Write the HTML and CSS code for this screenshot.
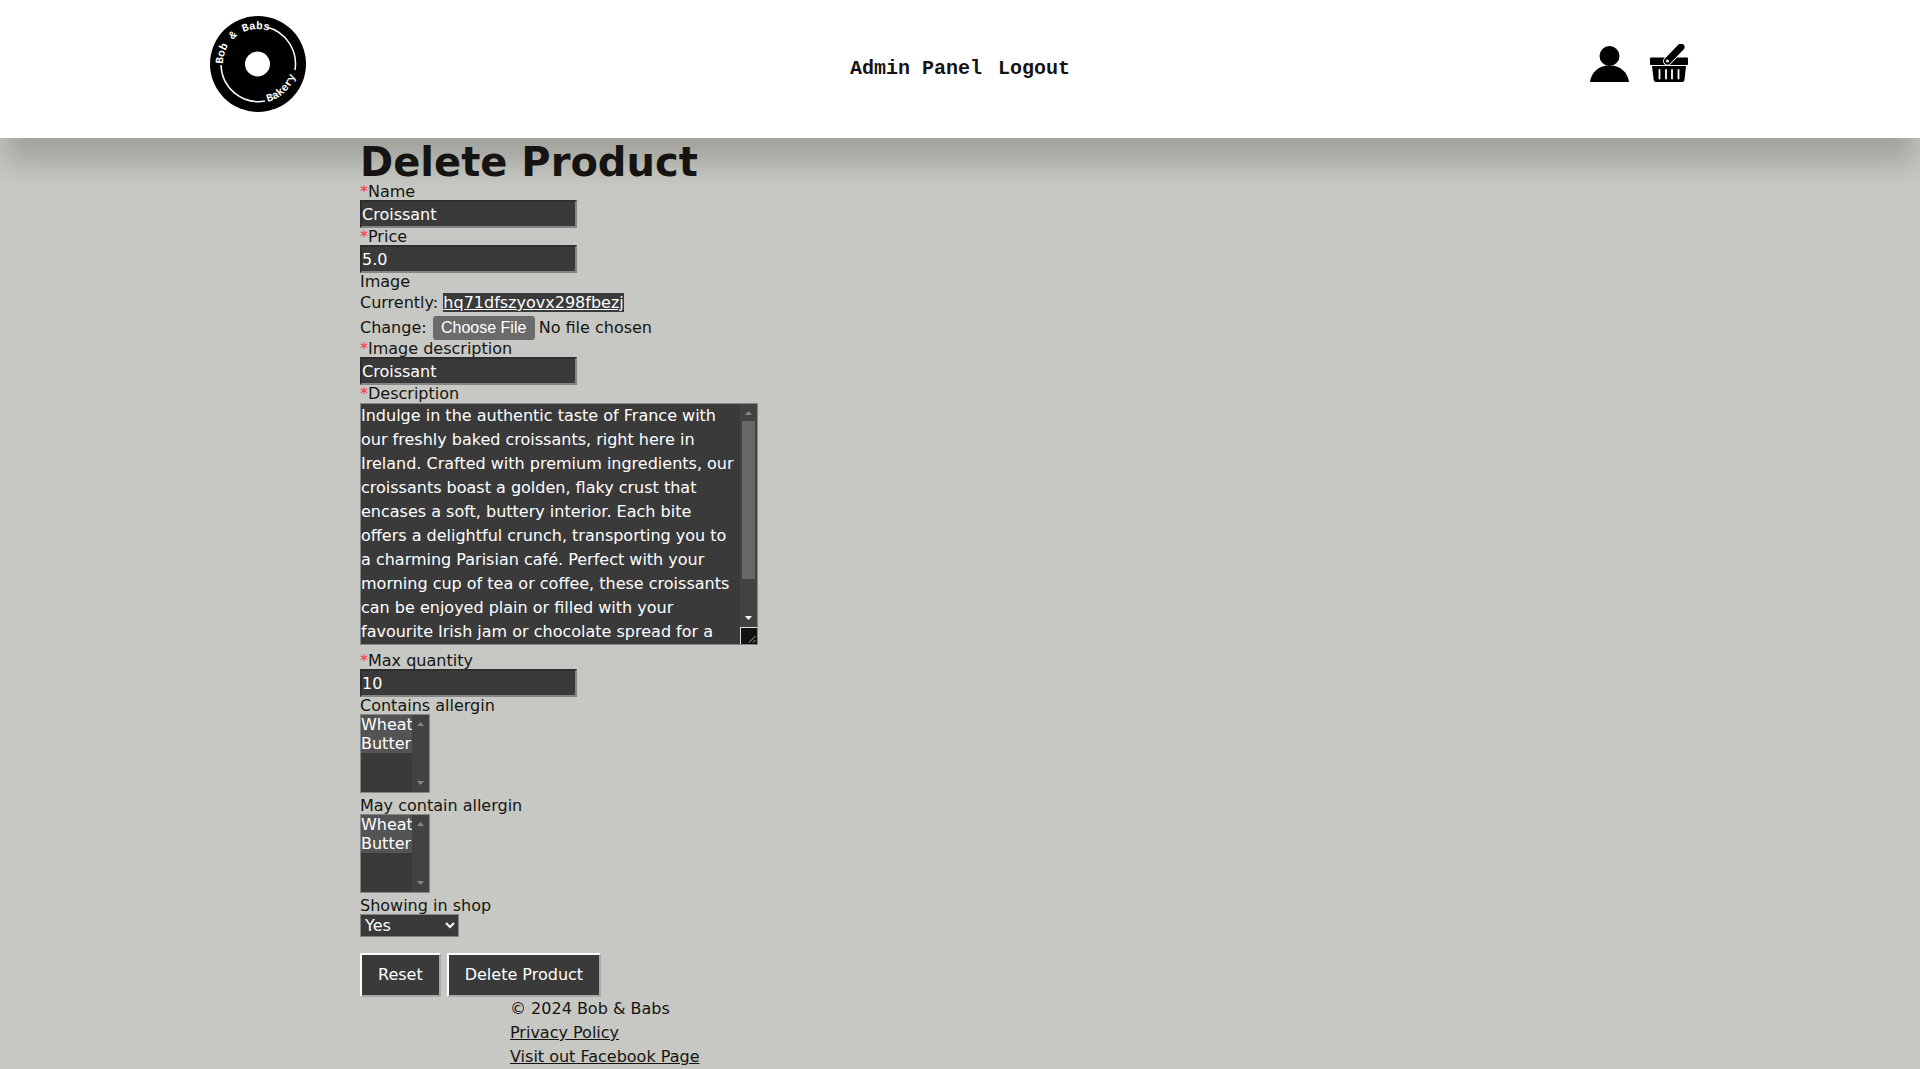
FILE: index.html
```html
<!DOCTYPE html>
<html lang="en">
<head>
<meta charset="utf-8">
<title>Delete Product | Bob &amp; Babs Bakery</title>
<link rel="stylesheet" href="styles.css">
</head>
<body>
<header class="site-header">
  <a class="logo" href="#" aria-label="Home">
    <svg width="96" height="96" viewBox="0 0 96 96">
      <defs>
        <path id="arc-top" d="M13 48A35 35 0 0 1 83 48"/>
        <path id="arc-bottom" d="M9 48A39 39 0 0 0 87 48"/>
      </defs>
      <circle cx="48" cy="48" r="48"/>
      <circle cx="47.500" cy="48" r="12.500" fill="#fff"/>
      <path d="M56.500 11A38 38 0 0 1 85 54M11 49A37.500 37.500 0 0 0 55 85" fill="none" stroke="#fff" stroke-width="1.500"/>
      <text class="logo-text"><textPath href="#arc-top">Bob &amp; Babs</textPath></text>
      <text class="logo-text"><textPath href="#arc-bottom" startOffset="71">Bakery</textPath></text>
    </svg>
  </a>
  <nav class="site-nav">
    <a href="#">Admin Panel</a>
    <a href="#">Logout</a>
  </nav>
  <div class="tools">
    <a href="#" aria-label="Account">
      <svg width="40" height="40" viewBox="0 0 40 40"><circle cx="19.500" cy="12" r="10"/><path d="M0 38C1 29 8 21.500 19.500 21.500S38 29 39 38z"/></svg>
    </a>
    <a href="#" aria-label="Basket">
      <svg width="40" height="40" viewBox="0 0 40 40">
        <rect x="0" y="13.500" width="38" height="7.500" rx="1"/>
        <path d="M2 22H36L34.500 36Q34.300 38 32 38H6Q4 38 3.700 36z"/>
        <path d="M9.500 26V34.500M16 26V34.500M22 26V34.500M28.500 26V34.500" stroke="#fff" stroke-width="1.800" stroke-linecap="round"/>
        <path d="M17.500 17L31 3" stroke="#fff" stroke-width="9" stroke-linecap="round"/>
        <path d="M17.500 17L31 3" stroke="#000" stroke-width="7" stroke-linecap="round"/>
        <circle cx="17.500" cy="17" r="1.500" fill="#fff"/>
      </svg>
    </a>
  </div>
</header>
<main class="content">
  <h1>Delete Product</h1>
  <form>
    <label for="name"><span class="required">*</span>Name</label>
    <input class="field" id="name" type="text" value="Croissant">
    <label for="price"><span class="required">*</span>Price</label>
    <input class="field" id="price" type="text" value="5.0">
    <label for="image">Image</label>
    <div class="file-current">Currently: <a href="#">hq71dfszyovx298fbezj</a></div>
    <div class="file-change">Change: <input id="image" type="file"></div>
    <label for="alt"><span class="required">*</span>Image description</label>
    <input class="field" id="alt" type="text" value="Croissant">
    <label for="description"><span class="required">*</span>Description</label>
    <div class="scroll-box text-box">
      <textarea id="description">Indulge in the authentic taste of France with our freshly baked croissants, right here in Ireland. Crafted with premium ingredients, our croissants boast a golden, flaky crust that encases a soft, buttery interior. Each bite offers a delightful crunch, transporting you to a charming Parisian café. Perfect with your morning cup of tea or coffee, these croissants can be enjoyed plain or filled with your favourite Irish jam or chocolate spread for a truly delicious treat.</textarea>
      <div class="scrollbar" aria-hidden="true">
        <svg class="arrow" viewBox="0 0 17 17"><path d="M5 11L8.500 7L12 11z"/></svg>
        <span class="thumb"></span>
        <svg class="arrow active" viewBox="0 0 17 17"><path d="M5 6L8.500 10L12 6z"/></svg>
        <svg class="grip" viewBox="0 0 17 17"><path d="M0 .5H17M.5 0V17" stroke="#ddd"/><path d="M9 15.500L15.500 9M13 15.500L15.500 13" stroke="#aaa"/></svg>
      </div>
    </div>
    <label for="max"><span class="required">*</span>Max quantity</label>
    <input class="field" id="max" type="text" value="10">
    <label for="contains">Contains allergin</label>
    <div class="scroll-box list-box">
      <select class="list" id="contains" multiple size="4"><option selected>Wheat</option><option selected>Butter</option></select>
      <div class="scrollbar" aria-hidden="true">
        <svg class="arrow" viewBox="0 0 17 17"><path d="M5 11L8.500 7L12 11z"/></svg>
        <svg class="arrow" viewBox="0 0 17 17"><path d="M5 6L8.500 10L12 6z"/></svg>
      </div>
    </div>
    <label for="may-contain">May contain allergin</label>
    <div class="scroll-box list-box">
      <select class="list" id="may-contain" multiple size="4"><option selected>Wheat</option><option selected>Butter</option></select>
      <div class="scrollbar" aria-hidden="true">
        <svg class="arrow" viewBox="0 0 17 17"><path d="M5 11L8.500 7L12 11z"/></svg>
        <svg class="arrow" viewBox="0 0 17 17"><path d="M5 6L8.500 10L12 6z"/></svg>
      </div>
    </div>
    <label for="showing">Showing in shop</label>
    <select class="dropdown" id="showing"><option>Yes</option><option>No</option></select>
    <div class="actions">
      <button type="reset">Reset</button>
      <button type="submit">Delete Product</button>
    </div>
  </form>
</main>
<footer class="site-footer">
  <p>© 2024 Bob &amp; Babs</p>
  <p><a href="#">Privacy Policy</a></p>
  <p><a href="#">Visit out Facebook Page</a></p>
</footer>
</body>
</html>
```
FILE: styles.css
```css
* { box-sizing: border-box; }

body {
  margin: 0;
  background: #c7c8c3;
  color: #161412;
  font: 16px/24px "DejaVu Sans", Verdana, sans-serif;
}

a { color: inherit; }

.site-header {
  display: grid;
  grid-template-columns: 1fr auto 1fr;
  align-items: start;
  padding: 16px 210px 26px;
  background: #fff;
  box-shadow: 0 30px 26px -5px rgba(20, 22, 10, 0.2);
}

.logo svg, .tools svg { display: block; }
.logo { justify-self: start; }

.logo-text {
  font: bold 11px "Liberation Mono", monospace;
  fill: #fff;
}

.site-nav {
  display: flex;
  gap: 16px;
  padding-top: 41px;
  font: bold 20px/24px "Liberation Mono", "Courier New", monospace;
}

.site-nav a { text-decoration: none; }

.tools {
  display: flex;
  gap: 20px;
  justify-content: flex-end;
  padding: 28px 20px 0 0;
}

.content {
  max-width: 1200px;
  margin: 0 auto;
  position: relative;
}

h1 {
  margin: 0;
  padding-top: 4px;
  font: bold 40px/41px "DejaVu Sans", Verdana, sans-serif;
}

label {
  display: block;
  line-height: 17px;
}

.required { color: #ff3030; }

input, textarea, select, button {
  font: inherit;
  color: #fff;
}

.field {
  display: block;
  width: 217px;
  height: 28px;
  padding: 0;
  background: #3a3a3a;
  border: 2px solid;
  border-color: #2e2e2e #858585 #858585 #2e2e2e;
}

.file-current { padding-top: 1px; }

.file-current a {
  display: inline-block;
  line-height: 19px;
  background: #3a3a3a;
  color: #fff;
}

.file-change {
  display: flex;
  align-items: center;
  gap: 6px;
  height: 25px;
}

.file-change input { color: #161412; }

.file-change input::file-selector-button {
  width: 102px;
  height: 24px;
  margin: 0 4px 0 0;
  padding: 0;
  border: 0;
  border-radius: 3px;
  background: #6b6b6b;
  color: #fff;
  font: 16px/22px "Liberation Sans", Arial, sans-serif;
}

/* Boxes with an always-visible dark scrollbar over their right edge */
.scroll-box {
  position: relative;
  border: 1px solid #858585;
  background: #3a3a3a;
}

.text-box {
  width: 398px;
  height: 242px;
  margin: 1px 0 7px;
}

.list-box {
  width: 70px;
  height: 79px;
  margin-bottom: 4px;
}

textarea, .list {
  display: block;
  width: calc(100% - 17px);
  height: 100%;
  padding: 0;
  background: none;
  border: 0;
  border-radius: 0;
  resize: none;
  overflow: hidden;
}

.scrollbar {
  position: absolute;
  inset: 0 0 0 auto;
  display: flex;
  flex-direction: column;
  justify-content: space-between;
  width: 17px;
  background: #424242;
}

.arrow, .grip {
  flex: none;
  width: 17px;
  height: 17px;
  fill: #868686;
}

.arrow.active { fill: #fff; }

.thumb {
  height: 158px;
  margin: 0 2px auto;
  background: #686868;
}

.grip {
  background: #121212;
  fill: none;
}

.list option {
  min-height: 19px;
  padding: 0;
  line-height: 19px;
}

.list option:checked {
  background: #545454 linear-gradient(#545454, #545454);
  color: #fff;
}

.dropdown {
  display: block;
  width: 99px;
  height: 23px;
  padding: 0;
  line-height: 20px;
  background: #3a3a3a;
  border: 1px solid #858585;
  border-radius: 0;
}

.actions {
  display: flex;
  gap: 6px;
  padding-top: 16px;
}

.actions button {
  height: 44px;
  padding: 0 16px;
  background: #3a3a3a;
  border: 2px solid;
  border-color: #fff #aaa #aaa #fff;
}

.site-footer {
  max-width: 900px;
  margin: 0 auto;
}

.site-footer p { margin: 0; }
```
